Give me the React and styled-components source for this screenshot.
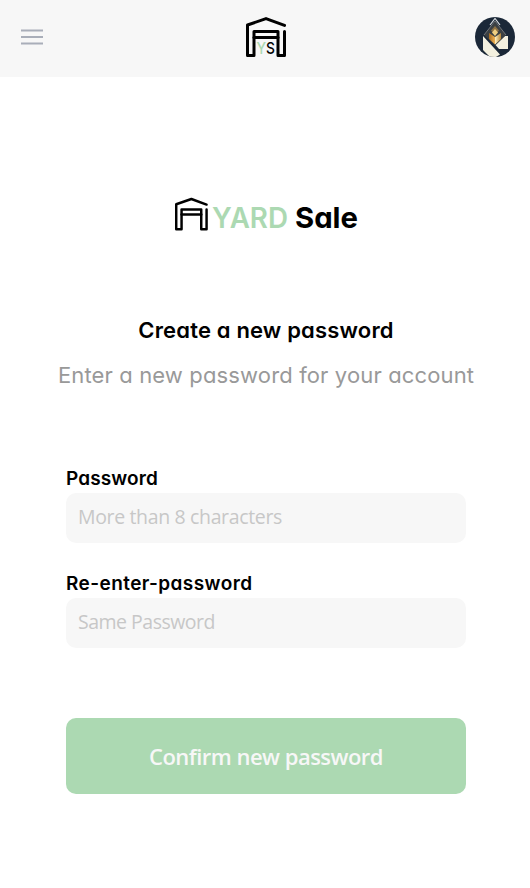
import React from "react";
import styled, { createGlobalStyle } from "styled-components";

const GlobalStyle = createGlobalStyle`
  * { box-sizing: border-box; }
  body { margin: 0; background: #fff; color: #000; }
`;

const rounded = `
  font-family: Inter, "Liberation Sans", sans-serif;
  font-feature-settings: "cv11" 1, "ss03" 1;
`;

const Page = styled.div`
  min-height: 888px;
  display: flex;
  flex-direction: column;
  ${rounded}
`;

const Header = styled.header`
  height: 77px;
  padding: 0 15px 3px 20px;
  background: #f7f7f7;
  display: grid;
  grid-template-columns: 40px 1fr 40px;
  align-items: center;

  svg { display: block; }
`;

const HeaderLogo = styled.div`
  display: flex;
  justify-content: center;
  padding-right: 3px;
`;

const MenuButton = styled.button`
  padding: 0;
  border: 0;
  background: none;
  width: 24px;
`;

const Main = styled.main`
  width: 418px;
  margin: 0 auto;
  padding: 120px 0 0 2px;
  display: flex;
  flex-direction: column;
  align-items: center;
`;

const Title = styled.h1`
  margin: 77px 0 0;
  font-size: 22px;
  line-height: 28px;
  font-weight: 600;
  letter-spacing: 0.17px;
  white-space: nowrap;
`;

const Subtitle = styled.p`
  margin: 17px 0 0;
  font-size: 22px;
  line-height: 28px;
  font-weight: 400;
  color: #999;
  white-space: nowrap;
  letter-spacing: 0.14px;
`;

const Form = styled.form`
  width: 400px;
  margin-top: 76px;
  display: flex;
  flex-direction: column;
`;

const Label = styled.label`
  font-size: 19px;
  line-height: 28px;
  font-weight: 600;
  letter-spacing: ${(p) => p.$tracking};
`;

const Input = styled.input`
  height: 50px;
  margin: 0 0 27px;
  padding: 0 12px 3px;
  border: 0;
  border-radius: 10px;
  background: #f7f7f7;
  font: 400 19.5px "Open Sans", "Noto Sans", sans-serif;
  letter-spacing: ${(p) => p.$tracking};

  &::placeholder { color: #c7c7c7; opacity: 1; }
`;

const Submit = styled.button`
  height: 76px;
  margin-top: 43px;
  padding: 0;
  border: 0;
  border-radius: 10px;
  background: #acd9b2;
  color: #f7f7f7;
  font: 600 22px "Open Sans", "Noto Sans", sans-serif;
  letter-spacing: -0.52px;
`;

const LogoText = styled.text`
  ${rounded}
  font-size: ${(p) => p.$size}px;
  font-weight: ${(p) => p.$weight};
  fill: ${(p) => p.$fill};
`;

const Garage = ({ stroke = 3 }) => (
  <g fill="none" stroke="#000" strokeWidth={stroke} strokeLinecap="round" strokeLinejoin="round">
    <path d="M38.5 8.4 20 1.6 1.5 8V38.5H8V14.5H32V38.5H38.5V14.5" />
    <path d="M8 20.5H32" />
  </g>
);

const YardMark = () => (
  <svg width="40" height="40" viewBox="0 0 40 40">
    <Garage />
    <LogoText $size={16} $weight={500} $fill="#acd9b2" x="10.5" y="36.5" textLength="18.5" lengthAdjust="spacingAndGlyphs">
      Y<tspan fill="#000">S</tspan>
    </LogoText>
  </svg>
);

const YardLogo = () => (
  <svg width="188" height="42" viewBox="-2 0 188 42">
    <g transform="translate(1 .7) scale(.82)">
      <Garage stroke={3} />
    </g>
    <LogoText $size={28} $weight={600} $fill="#acd9b2" x="38" y="31" textLength="76" lengthAdjust="spacingAndGlyphs">YARD</LogoText>
    <LogoText $size={29} $weight={650} $fill="#000" x="121" y="31" textLength="63" lengthAdjust="spacingAndGlyphs">Sale</LogoText>
  </svg>
);

const MenuIcon = () => (
  <svg width="24" height="18" viewBox="0 0 24 18" fill="none" stroke="#a9aeb9" strokeWidth="2">
    <path d="M1 2.5H23M1 9H23M1 15.5H23" />
  </svg>
);

const Avatar = () => (
  <svg width="40" height="40" viewBox="0 0 40 40">
    <defs>
      <clipPath id="avatarCircle"><circle cx="20" cy="20" r="20" /></clipPath>
      <linearGradient id="avatarGold" x1="0" y1="0" x2="1" y2="0">
        <stop offset="0" stopColor="#a76b20" />
        <stop offset=".48" stopColor="#edb052" />
        <stop offset=".52" stopColor="#fff0bd" />
        <stop offset="1" stopColor="#b48335" />
      </linearGradient>
    </defs>
    <g clipPath="url(#avatarCircle)">
      <rect width="40" height="40" fill="#1b2838" />
      <path d="M8 19 25 37.5 21 40H15L8 33ZM33 19V32H24L20.5 28 30 19Z" fill="#f3f0df" />
      <path d="M20 5 31 18 20 28.5 9 18Z" fill="#3b4043" />
      <path d="M9 18 20 4 31 18" fill="none" stroke="#74777a" strokeWidth="1" />
      <path d="M15 8 20 1.5 25 8" fill="none" stroke="#d7dce0" strokeWidth="1.2" />
      <path d="M14 16 20 20 26 16V22L20 27.5 14 22Z" fill="url(#avatarGold)" />
      <path d="M20 9 24 13.5 20 18 16 13.5Z" fill="#8e7245" />
      <path d="M20 12 23 15.5 20 19 17 15.5Z" fill="#efcf82" />
    </g>
  </svg>
);

export default function App() {
  return (
    <>
      <GlobalStyle />
      <Page>
        <Header>
          <MenuButton aria-label="Menu"><MenuIcon /></MenuButton>
          <HeaderLogo><YardMark /></HeaderLogo>
          <Avatar />
        </Header>
        <Main>
          <YardLogo />
          <Title>Create a new password</Title>
          <Subtitle>Enter a new password for your account</Subtitle>
          <Form>
            <Label htmlFor="password" $tracking="0.12px">Password</Label>
            <Input id="password" type="password" placeholder="More than 8 characters" $tracking="-0.35px" />
            <Label htmlFor="repeat" $tracking="0.42px">Re-enter-password</Label>
            <Input id="repeat" type="password" placeholder="Same Password" $tracking="-0.5px" />
            <Submit type="button">Confirm new password</Submit>
          </Form>
        </Main>
      </Page>
    </>
  );
}
